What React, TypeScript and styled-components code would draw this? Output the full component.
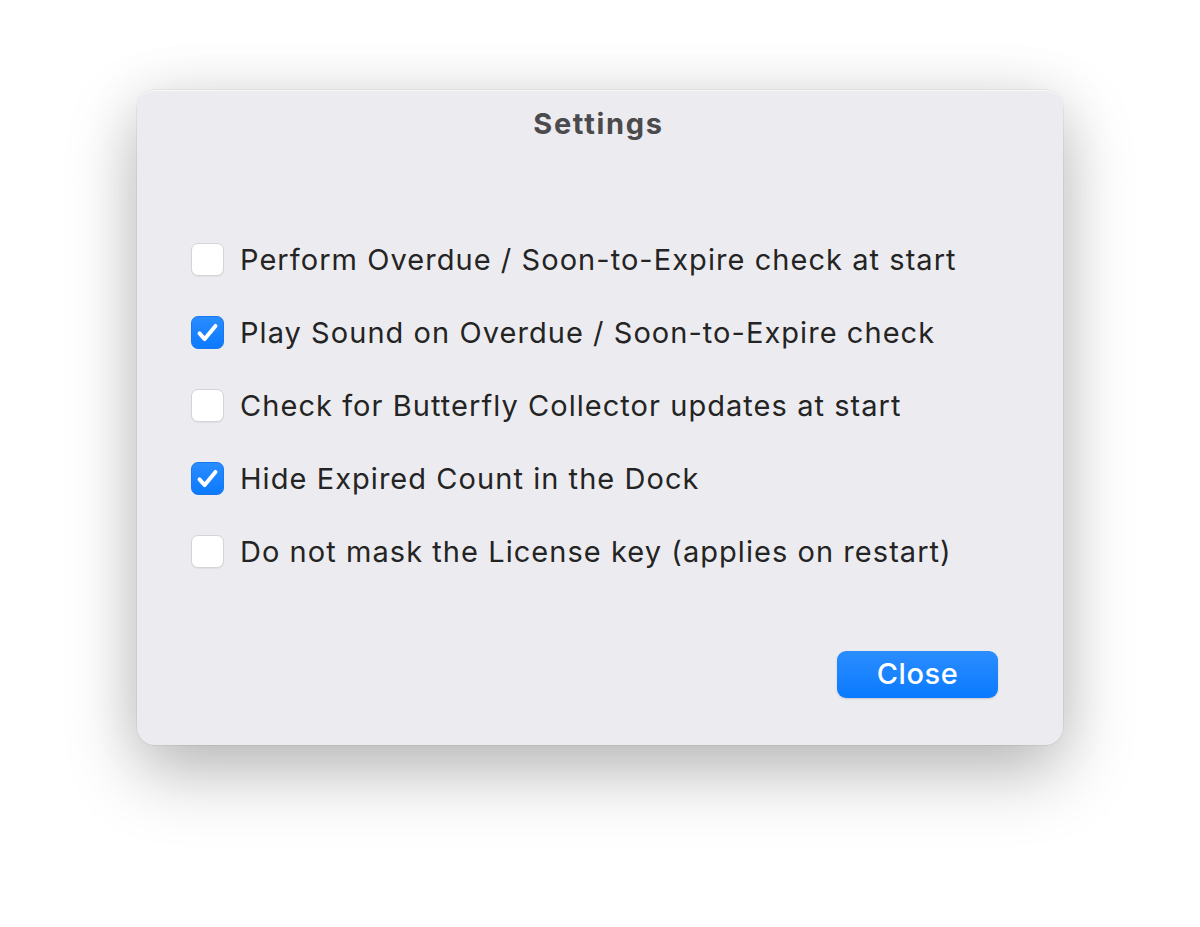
import styled, { createGlobalStyle } from "styled-components";

interface SettingItem {
  label: string;
  checked: boolean;
}

const items: SettingItem[] = [
  { label: "Perform Overdue / Soon-to-Expire check at start", checked: false },
  { label: "Play Sound on Overdue / Soon-to-Expire check", checked: true },
  { label: "Check for Butterfly Collector updates at start", checked: false },
  { label: "Hide Expired Count in the Dock", checked: true },
  { label: "Do not mask the License key (applies on restart)", checked: false },
];

const GlobalStyle = createGlobalStyle`
  body {
    margin: 0;
    background: #ffffff;
    font-family: "Inter", "Liberation Sans", sans-serif;
  }
`;

const Page = styled.div`
  width: 1200px;
  height: 927px;
  display: flex;
  justify-content: center;
  padding-top: 90px;
  box-sizing: border-box;
`;

const Window = styled.div`
  width: 926px;
  height: 655px;
  box-sizing: border-box;
  background: #ececf0;
  border-radius: 18px;
  box-shadow: 0 0 0 1px rgba(0, 0, 0, 0.05), inset 0 1px 0 rgba(255, 255, 255, 0.7),
    0 28px 70px rgba(0, 0, 0, 0.26), 0 0 60px rgba(0, 0, 0, 0.07);
  display: flex;
  flex-direction: column;
  padding: 18px 65px 47px 54px;
`;

const Title = styled.h1`
  margin: 0;
  text-align: center;
  font-size: 29px;
  line-height: 32px;
  font-weight: 700;
  letter-spacing: 1.7px;
  color: #4b4b4d;
  padding-left: 8px;
`;

const List = styled.ul`
  list-style: none;
  margin: 83px 0 0;
  padding: 0;
`;

const Row = styled.li`
  height: 73px;
  display: flex;
  align-items: center;
  gap: 16px;
  font-size: 29px;
  letter-spacing: 1.05px;
  color: #242424;
`;

const Box = styled.span<{ $checked: boolean }>`
  width: 33px;
  height: 33px;
  box-sizing: border-box;
  border-radius: 7px;
  flex: none;
  display: flex;
  align-items: center;
  justify-content: center;
  background: ${(p) => (p.$checked ? "linear-gradient(#2a8cff, #0b7aff)" : "#ffffff")};
  border: 1px solid ${(p) => (p.$checked ? "#1679f0" : "#d4d4d8")};
  box-shadow: ${(p) => (p.$checked ? "none" : "0 1px 1px rgba(0,0,0,0.05)")};
`;

const Footer = styled.div`
  margin-top: auto;
  display: flex;
  justify-content: flex-end;
`;

const Button = styled.button`
  width: 161px;
  height: 47px;
  border-radius: 9px;
  border: none;
  background: linear-gradient(#2b8dff, #0a7aff);
  box-shadow: 0 1px 2px rgba(0, 0, 0, 0.15);
  color: #ffffff;
  font-family: "Inter", "Liberation Sans", sans-serif;
  font-size: 29px;
  font-weight: 500;
  letter-spacing: 0.6px;
  padding: 0 0 3px;
  cursor: pointer;
`;

function Check() {
  return (
    <svg width="33" height="33" viewBox="0 0 33 33" fill="none">
      <path
        d="M8 17.5 L13.5 23.5 L25 9.5"
        stroke="#ffffff"
        strokeWidth="4.2"
        strokeLinecap="round"
        strokeLinejoin="round"
      />
    </svg>
  );
}

export default function App() {
  return (
    <Page>
      <GlobalStyle />
      <Window>
        <Title>Settings</Title>
        <List>
          {items.map((item) => (
            <Row key={item.label}>
              <Box $checked={item.checked}>{item.checked && <Check />}</Box>
              {item.label}
            </Row>
          ))}
        </List>
        <Footer>
          <Button>Close</Button>
        </Footer>
      </Window>
    </Page>
  );
}
